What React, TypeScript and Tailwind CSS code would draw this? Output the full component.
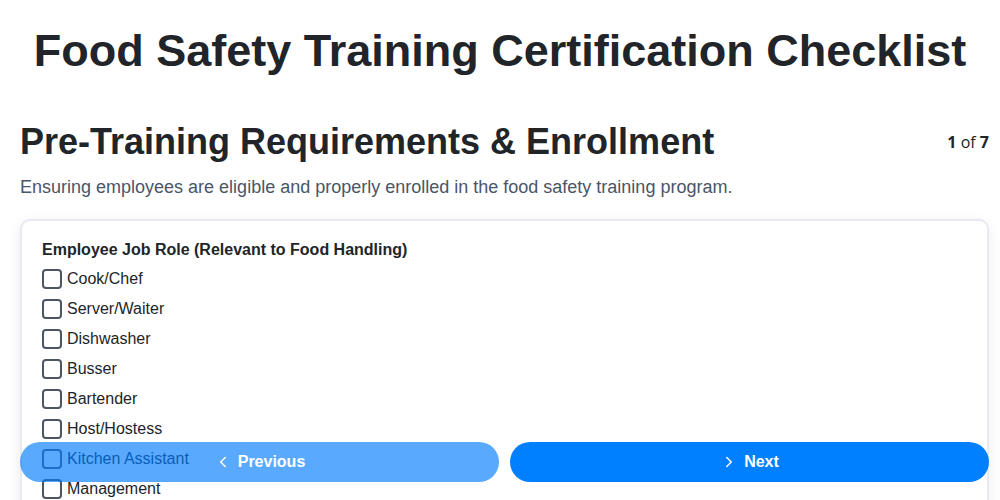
import { ChevronLeft, ChevronRight } from "lucide-react"

const roles = [
  "Cook/Chef",
  "Server/Waiter",
  "Dishwasher",
  "Busser",
  "Bartender",
  "Host/Hostess",
  "Kitchen Assistant",
  "Management",
  "Other",
]

const RoleOption = ({ label }: { label: string }) => (
  <label className="flex items-center h-[30px] text-[16px] text-[#212529] cursor-pointer">
    <span className="w-5 h-5 border-2 border-[#4b5563] rounded-[4px] bg-white mr-[5px] shrink-0" />
    {label}
  </label>
)

export default function App() {
  return (
    <div className="min-h-screen bg-white font-['Liberation_Sans',Arial,sans-serif] text-[#212529]">
      <h1 className="pt-[24px] text-center text-[45px] leading-[54px] font-bold font-['Liberation_Sans_Narrow','Liberation_Sans',sans-serif] text-[#212529]">
        Food Safety Training Certification Checklist
      </h1>

      <div className="pl-5 pr-[11px] pt-[42px] pb-24">
        <div className="flex items-center justify-between">
          <h2 className="text-[36px] leading-[44px] font-bold">Pre-Training Requirements &amp; Enrollment</h2>
          <div className="text-[16px] font-['Open_Sans',sans-serif] text-[#212529]">
            <b>1</b> of <b>7</b>
          </div>
        </div>
        <p className="mt-[11px] text-[18px] leading-6 text-[#4a5568]">
          Ensuring employees are eligible and properly enrolled in the food safety training program.
        </p>

        <div className="mt-[20px] rounded-[10px] border-2 border-[#e9e9f0] bg-white shadow-[0_4px_14px_rgba(0,0,0,0.08)] px-[20px] pt-[17px] pb-6">
          <div className="text-[16px] font-bold leading-6 mb-[2px]">Employee Job Role (Relevant to Food Handling)</div>
          <div className="flex flex-col">
            {roles.map((r) => (
              <RoleOption key={r} label={r} />
            ))}
          </div>
        </div>
      </div>

      <div className="fixed bottom-[18px] left-5 right-[11px] flex gap-[11px]">
        <button className="flex-1 h-10 rounded-full bg-[#007bff] opacity-65 text-white font-bold text-[16px] flex items-center justify-center gap-1.5">
          <ChevronLeft size={18} strokeWidth={2} />
          Previous
        </button>
        <button className="flex-1 h-10 rounded-full bg-[#0080ff] text-white font-bold text-[16px] flex items-center justify-center gap-1.5">
          <ChevronRight size={18} strokeWidth={2} />
          Next
        </button>
      </div>
    </div>
  )
}
